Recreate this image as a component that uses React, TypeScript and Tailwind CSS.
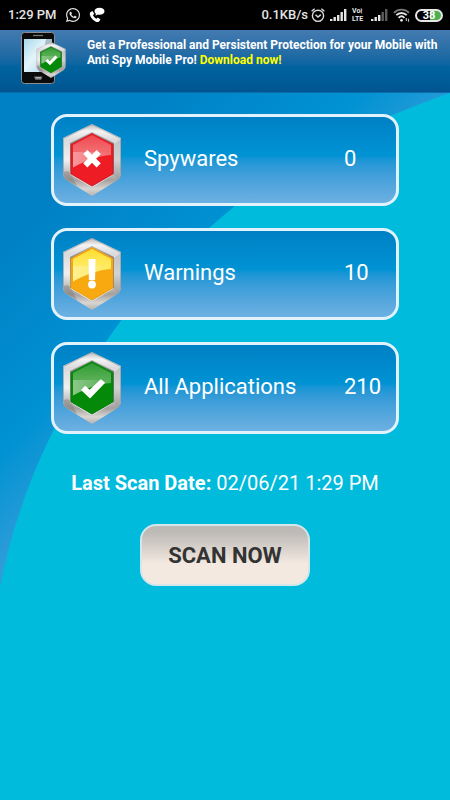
import type { ReactNode } from 'react';
import { FaWhatsapp } from 'react-icons/fa';

type Tone = 'red' | 'amber' | 'green';

const tones: Record<Tone, { top: string; mid: string; bottom: string; edge: string }> = {
  red: { top: '#ee4a50', mid: '#f2696d', bottom: '#ee1c25', edge: '#d3151e' },
  amber: { top: '#ffdd2e', mid: '#ffe95c', bottom: '#f7a90f', edge: '#f0a010' },
  green: { top: '#2f9a33', mid: '#55ae52', bottom: '#048a08', edge: '#0a7c10' },
};

const marks: Record<Tone, ReactNode> = {
  red: <path d="M23.300 28 36.700 41.400M36.700 28 23.300 41.400" stroke="#fff" strokeWidth="5.800" />,
  amber: (
    <g fill="#fff">
      <path d="M26.500 21h7l-.4 21h-6.200z" />
      <circle cx="30" cy="46.500" r="3.900" />
    </g>
  ),
  green: <path d="M19 38l4.200-4.200 4.400 4L38.800 27.200l4.400 3.600L28 46.400z" fill="#fff" />,
};

function Shield({ tone, id, className }: { tone: Tone; id: string; className?: string }) {
  const c = tones[tone];
  return (
    <svg viewBox="0 0 60 72" className={className} fill="none" aria-hidden="true">
      <defs>
        <linearGradient id={`${id}-rim`} x1="0" y1="0" x2="0" y2="1">
          <stop offset="0" stopColor="#b9b9bb" />
          <stop offset="0.1" stopColor="#f4f4f4" />
          <stop offset="0.22" stopColor="#dadadc" />
          <stop offset="0.5" stopColor="#efefef" />
          <stop offset="0.78" stopColor="#a3a1a0" />
          <stop offset="0.9" stopColor="#d9d5d1" />
          <stop offset="1" stopColor="#b5b2af" />
        </linearGradient>
        <linearGradient id={`${id}-bevel`} x1="0" y1="0" x2="1" y2="0.3">
          <stop offset="0" stopColor="#828285" />
          <stop offset="0.5" stopColor="#b5b5b7" />
          <stop offset="1" stopColor="#7d7d80" />
        </linearGradient>
        <linearGradient id={`${id}-gloss`} x1="0" y1="0" x2="0" y2="1">
          <stop offset="0" stopColor={c.top} />
          <stop offset="0.45" stopColor={c.mid} />
          <stop offset="1" stopColor={c.mid} />
        </linearGradient>
        <linearGradient id={`${id}-shine`} x1="0" y1="0" x2="1" y2="0">
          <stop offset="0" stopColor="#fff" stopOpacity="0.32" />
          <stop offset="1" stopColor="#fff" stopOpacity="0" />
        </linearGradient>
      </defs>
      <path d="M30 0 59 14v36q-.5 4-4 6.500L30 72 5 56.500Q1.500 54 1 50V14z" fill={`url(#${id}-rim)`} />
      <path d="M59 15v35q-.5 3-3 5.500L52 51V20z" fill="#8e8e91" opacity="0.3" />
      <path d="M1.500 48v2q.5 4 3.500 6L15 62l-5-10-4-5z" fill="#77716e" opacity="0.4" />
      <path d="M1.500 50V14.500L30 .6l28.500 13.900V50" stroke="#9b9b9e" strokeWidth="0.700" />
      <path d="M30 8 52 19v31.500L30 63.500 8 50.500V19z" fill={`url(#${id}-bevel)`} />
      <path d="M8 50.500 30 63.500l22-13L51 50 30 62.500 9 50z" fill="#f1f1f1" />
      <path d="M30 9.500 51 20.500V50L30 62 9 50V20.500z" fill={c.bottom} stroke={c.edge} strokeWidth="0.800" />
      <path d="M30 11 49 21v10C36 32 25 36 11 43.500V21z" fill={`url(#${id}-gloss)`} />
      <path d="M11 28h38v3C36 32 25 36 11 43.500z" fill={`url(#${id}-shine)`} />
      {marks[tone]}
    </svg>
  );
}

function CallIcon() {
  return (
    <svg viewBox="0 0 16 16" className="h-4 w-4" fill="none" aria-hidden="true">
      <path d="M1.300 5.200 3.400 3.900 5.300 6.700 4 8.300c.7 1.600 1.800 2.700 3.300 3.400l1.500-1.300 2.700 2-1.400 2.100c-.9.900-2.500.7-4.100-.3C3 12.400 1.300 9.900.8 7.200c-.1-.8.1-1.500.5-2z" fill="#fff" />
      <path d="M10.500.8c2.900 0 5 1.500 5 3.500s-2.100 3.500-5 3.500c-.6 0-1.200-.1-1.700-.2L6.500 8.700l.4-2C6 6.100 5.500 5.200 5.500 4.300c0-2 2.100-3.500 5-3.500z" fill="#fff" />
    </svg>
  );
}

function AlarmIcon() {
  return (
    <svg viewBox="0 0 14 16" width="14" height="16" className="shrink-0" fill="none" stroke="#dcdcdc" strokeWidth="1.400" aria-hidden="true">
      <circle cx="7" cy="8.800" r="5.600" />
      <path d="M4.500 7.800 7 10 9.800 7.600M.6 4.300 3.600 1.800M13.400 4.300l-3-2.500" />
    </svg>
  );
}

function SignalIcon({ bars }: { bars: number }) {
  return (
    <svg viewBox="0 0 17 12" width="17" height="12" className="shrink-0" aria-hidden="true">
      {[2, 4, 6, 9, 12].map((h, i) => (
        <rect key={h} x={i * 3.5} y={12 - h} width="2.400" height={h} fill={i < bars ? '#e6e6e6' : '#5c5c5c'} />
      ))}
    </svg>
  );
}

function WifiIcon() {
  return (
    <svg viewBox="0 0 17 14" width="17" height="14" className="shrink-0" fill="none" strokeWidth="1.900" aria-hidden="true">
      <path d="M1 4.800C5 .6 12 .6 16 4.800" stroke="#777" />
      <path d="M3.300 7.200c2.900-3 7.500-3 10.400 0M5.600 9.800c1.700-1.700 4.100-1.700 5.800 0" stroke="#e6e6e6" />
      <circle cx="8.500" cy="12.300" r="1.400" fill="#e6e6e6" />
      <path d="M13.300 10v3M15.500 10.800v3" stroke="#bbb" strokeWidth="1.200" />
    </svg>
  );
}

function StatusBar() {
  return (
    <header className="flex h-[30px] items-center justify-between bg-black pr-[7px] pl-2 text-[13px] font-medium text-[#e4e4e4]">
      <div className="flex items-center gap-2">
        <span>1:29 PM</span>
        <FaWhatsapp className="h-4 w-4" aria-hidden="true" />
        <CallIcon />
      </div>
      <div className="flex items-center gap-[5px]">
        <div className="flex items-center gap-[3px]">
          <span>0.1KB/s</span>
          <AlarmIcon />
        </div>
        <SignalIcon bars={5} />
        <div className="flex w-[14px] flex-col gap-px text-[7px] leading-[7px] font-bold">
          <span>Vo≀</span>
          <span>LTE</span>
        </div>
        <SignalIcon bars={3} />
        <WifiIcon />
        <span className="flex h-[13px] w-7 items-center justify-center rounded-full border-2 border-[#e6e6e6] bg-linear-to-r from-black from-55% to-[#4caf50] to-55% text-[11px] leading-none font-bold text-white">
          38
        </span>
      </div>
    </header>
  );
}

function PhoneArt() {
  return (
    <svg viewBox="0 0 46 54" className="h-[54px] w-[46px]" fill="none" aria-hidden="true">
      <defs>
        <linearGradient id="screen" x1="0" y1="0" x2="1" y2="1">
          <stop offset="0" stopColor="#a9d8ea" />
          <stop offset="0.45" stopColor="#e4f5fb" />
          <stop offset="1" stopColor="#a5d5ea" />
        </linearGradient>
      </defs>
      <rect x="0.500" y="2.500" width="33" height="51" rx="3" fill="#0b0b0c" stroke="#8b8f94" />
      <path d="M12 5.500h10" stroke="#77797c" strokeWidth="1.200" />
      <rect x="3" y="9" width="28" height="33" fill="url(#screen)" />
      <path d="M25 9h6v33H18z" fill="#6b8594" opacity="0.500" />
      <path d="M13 46.500h8.500l-1.200 3.200h-6z" fill="#6e7174" />
      <path d="M14.500 47.800h5.500" stroke="#ddd" strokeWidth="0.800" />
      <svg x="15" y="12" width="30" height="36">
        <Shield tone="green" id="promo" />
      </svg>
    </svg>
  );
}

function PromoBanner() {
  return (
    <div className="flex h-[63px] items-start gap-5 overflow-hidden border-b border-[#0a6cab] bg-linear-to-b from-[#437bb0] via-[#00639f] via-60% to-[#005590] pl-[21px]">
      <div className="shrink-0">
        <PhoneArt />
      </div>
      <p className="pt-2 text-[12px] leading-[15px] font-bold whitespace-nowrap text-white">
        Get a Professional and Persistent Protection for your Mobile with
        <br />
        Anti Spy Mobile Pro!{' '}
        <a href="#download" className="text-[#ffff00]">
          Download now!
        </a>
      </p>
    </div>
  );
}

// Blue corner behind the sweeping cyan curve
function Backdrop() {
  return (
    <svg viewBox="0 0 450 707" preserveAspectRatio="none" className="absolute inset-0 h-full w-full" aria-hidden="true">
      <defs>
        <linearGradient id="corner" gradientUnits="userSpaceOnUse" x1="0" y1="0" x2="240" y2="240">
          <stop offset="0.300" stopColor="#0080c5" />
          <stop offset="0.750" stopColor="#0092d3" />
          <stop offset="1" stopColor="#309dd9" />
        </linearGradient>
      </defs>
      <rect width="450" height="707" fill="url(#corner)" />
      <path d="M450 0C365 30 295 65 236 112C190 150 150 188 120 229C60 310 18 400 0 494V707H450Z" fill="#00bbdc" />
    </svg>
  );
}

const results: { label: string; count: number; tone: Tone }[] = [
  { label: 'Spywares', count: 0, tone: 'red' },
  { label: 'Warnings', count: 10, tone: 'amber' },
  { label: 'All Applications', count: 210, tone: 'green' },
];

export default function App() {
  return (
    <div className="flex min-h-screen flex-col overflow-hidden bg-[#00bbdc] font-['Roboto',sans-serif]">
      <StatusBar />
      <PromoBanner />
      <main className="relative flex-1">
        <Backdrop />
        <div className="relative flex flex-col items-center px-[51px] pt-[21px]">
          <ul className="flex w-full flex-col gap-[22px]">
            {results.map((item) => (
              <li
                key={item.label}
                className="flex h-[92px] items-center rounded-[16px] border-3 border-[#e2f2fc] bg-linear-to-b from-[#0080c5] via-[#0093d4] via-45% to-[#6db0e2] pl-2 text-[22px] text-white"
              >
                <Shield tone={item.tone} id={item.tone} className="h-[72px] w-[60px] shrink-0" />
                <span className="flex-1 pb-1 pl-[22px]">{item.label}</span>
                <span className="w-[52px] pb-1">{item.count}</span>
              </li>
            ))}
          </ul>
          <p className="mt-9 text-[20px] leading-[26px] text-white">
            <strong className="font-bold">Last Scan Date:</strong> 02/06/21 1:29 PM
          </p>
          <button
            type="button"
            className="mt-7 h-[62px] w-[170px] rounded-[16px] border-2 border-[#d3e6ea] bg-linear-to-b from-[#bcb9b6] from-10% to-[#f3e9e0] to-65% text-[22px] font-bold text-[#333]"
          >
            SCAN NOW
          </button>
        </div>
      </main>
    </div>
  );
}
